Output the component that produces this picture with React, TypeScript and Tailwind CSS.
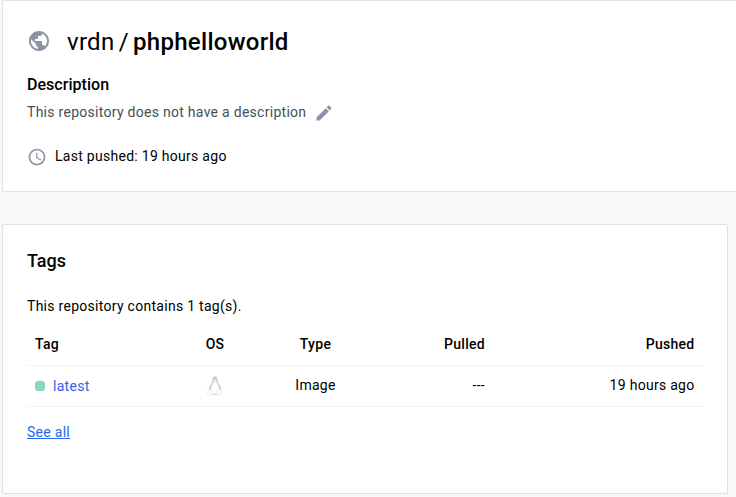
import { MdEdit, MdPublic, MdSchedule } from "react-icons/md";

function LinuxIcon() {
  return (
    <svg width="16" height="20" viewBox="0 0 16 20" fill="none">
      <path
        d="M8 .3C6.200.3 5.400 1.600 5.500 3.400c.1 2-.6 3-1.700 4.900C2.500 10.300 1.700 12 2 14L5.400 18.800h5.200L14 14c.3-2-.5-4-1.800-5.700-1.100-1.600-1.700-2.700-1.700-4.900C10.500 1.500 9.700.3 8 .3Z"
        fill="#cdcdcd"
      />
      <path d="M8 5.200C7 5.300 6.600 5.900 6.400 6.600 5.600 8.400 3.900 10.600 3.900 13l2.300 4.400c1.200.6 2.500.6 3.700 0l2.300-4.400c0-2.500-1.700-4.700-2.500-6.400C9.400 5.700 8.900 5.200 8 5.200Z" fill="#fff" />
      <path d="M6.400 4.200 8 3.400l1.700.8L8 5.400Z" fill="#ececec" />
      <path
        d="M2.700 13.300c-.7 0-.8 1-1.600 1.300-.9.400-.2 1.500-.5 2.400-.3.900.3 1.300 1.400 1.500 1.200.3 1.900.9 2.700.9 1.200 0 1.700-1 1.300-2.100-.5-1.300-2-4-3.300-4ZM12.800 13.300c.9 0 1 1.200 1.600 1.800.6.500 1.200.9 1 1.500-.3.800-1.600 1-2.500 1.800-.9.800-1.600 1.100-2.300.8-1-.4-.8-1.600-.6-2.800.2-1.300-.2-2.600.6-3 .6-.3 1.300-.1 2.200-.1Z"
        fill="#fdfdfd"
        stroke="#dedede"
        strokeWidth=".6"
      />
    </svg>
  );
}

function RepositorySummary() {
  return (
    <section className="ml-[2px] h-[192px] rounded-l-[2px] border border-r-0 border-[#e1e2e6] bg-white pl-6">
      <h1 className="flex h-8 mt-[25px] items-center text-2xl font-normal">
        <MdPublic className="mr-4 size-6 -mt-0.5 text-[#8993a5]" />
        <span className="whitespace-pre [word-spacing:-2px]">vrdn / <b className="font-medium">phphelloworld</b></span>
      </h1>
      <h2 className="mt-[17px] h-5 text-base leading-5 font-medium tracking-[0.04px]">Description</h2>
      <div className="mt-[7px] flex h-5 items-center text-[#445058]">
        <span>This repository does not have a description</span>
        <MdEdit className="mt-px ml-2 size-5 text-[#8993a5]" />
      </div>
      <div className="mt-6 flex h-5 items-center">
        <MdSchedule className="mt-px mr-2 size-5 text-[#8993a5]" />
        <span>Last pushed: 19 hours ago</span>
      </div>
    </section>
  );
}

function TagsCard() {
  return (
    <section className="mt-8 ml-[2px] h-[270px] w-[726px] rounded-[2px] border border-[#e0e0e0] bg-white pl-6">
      <h2 className="mt-6 text-lg leading-6 font-medium tracking-normal">Tags</h2>
      <p className="mt-[23px] h-5">This repository contains 1 tag(s).</p>
      <table className="mt-2 w-[677px] table-fixed border-collapse">
        <colgroup>
          <col className="w-[136px]" />
          <col className="w-[104px]" />
          <col className="w-[97px]" />
          <col className="w-[129px]" />
          <col />
        </colgroup>
        <thead>
          <tr className="h-[41px] border-b border-[#f3f3f3] [&>th]:px-2 [&>th]:font-medium">
            <th className="text-left">Tag</th>
            <th>OS</th>
            <th>Type</th>
            <th className="text-right">Pulled</th>
            <th className="text-right"><span className="mr-[1.5px]">Pushed</span></th>
          </tr>
        </thead>
        <tbody>
          <tr className="h-[41px] border-b border-[#f3f3f3] [&>td]:px-2 [&>td]:py-0">
            <td>
              <div className="flex items-center gap-2 text-[#3163eb]">
                <span className="size-2.5 rounded-[3px] bg-[#87d6bd]" />
                <a>latest</a>
              </div>
            </td>
            <td><div className="flex justify-center"><LinuxIcon /></div></td>
            <td className="pb-0.5! text-center">Image</td>
            <td className="pb-0.5! text-right">---</td>
            <td className="pb-0.5! text-right"><span className="mr-[1.5px]">19 hours ago</span></td>
          </tr>
        </tbody>
      </table>
      <a className="mt-[15px] block w-fit leading-5 text-[#246be9] underline">See all</a>
    </section>
  );
}

export default function App() {
  return (
    <main className="h-[497px] overflow-hidden bg-[#f9f9f9] font-[Roboto,sans-serif] text-sm leading-5 tracking-[0.28px] text-black">
      <RepositorySummary />
      <TagsCard />
    </main>
  );
}
